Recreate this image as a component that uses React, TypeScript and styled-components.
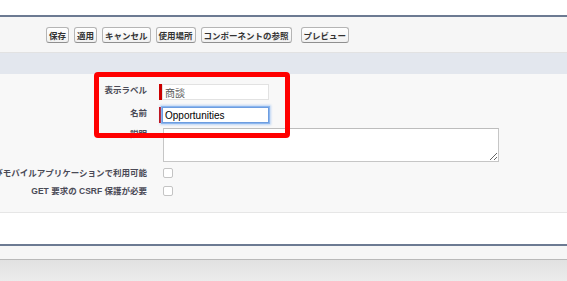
import styled, { createGlobalStyle } from "styled-components";

const GlobalStyle = createGlobalStyle`
  html, body {
    margin: 0;
    padding: 0;
    background: #ffffff;
  }
  body {
    font-family: "Liberation Sans", Arial, "Noto Sans CJK JP", sans-serif;
    color: #333;
  }
`;

type ButtonItem = {
  label: string;
  spaced?: boolean;
};

const buttons: ButtonItem[] = [
  { label: "保存" },
  { label: "適用" },
  { label: "キャンセル" },
  { label: "使用場所" },
  { label: "コンポーネントの参照" },
  { label: "プレビュー", spaced: true },
];

export default function App() {
  return (
    <>
      <GlobalStyle />
      <Page>
        <TopSpace />
        <Toolbar>
          {buttons.map((b) => (
            <Button key={b.label} $spaced={b.spaced}>
              {b.label}
            </Button>
          ))}
        </Toolbar>
        <SectionBand />
        <FormPanel>
          <Row $top={0}>
            <Label>
              <span>表示ラベル</span>
            </Label>
            <Field $required>
              <TextInput defaultValue="商談" $muted />
            </Field>
          </Row>
          <Row $top={7}>
            <Label>
              <span>名前</span>
            </Label>
            <Field $required>
              <TextInput defaultValue="Opportunities" $focused />
            </Field>
          </Row>
          <Row $top={5}>
            <Label>
              <span>説明</span>
            </Label>
            <Field>
              <TextArea />
            </Field>
          </Row>
          <CheckRow $top={5}>
            <Label>
              <span>Lightning Experience、Experience Builder サイト、およびモバイルアプリケーションで利用可能</span>
            </Label>
            <Field>
              <CheckBox type="checkbox" />
            </Field>
          </CheckRow>
          <CheckRow $top={6}>
            <Label>
              <span>GET 要求の CSRF 保護が必要</span>
            </Label>
            <Field>
              <CheckBox type="checkbox" />
            </Field>
          </CheckRow>
        </FormPanel>
        <WhiteGap />
        <FooterBar />
        <BottomShade />
        <Highlight />
      </Page>
    </>
  );
}

const Page = styled.div`
  position: relative;
  width: 567px;
  height: 281px;
  overflow: hidden;
  display: flex;
  flex-direction: column;
`;

const TopSpace = styled.div`
  height: 15px;
  flex: none;
  background: #ffffff;
`;

const Toolbar = styled.div`
  display: flex;
  flex: none;
  align-items: flex-start;
  gap: 5px;
  height: 25px;
  padding: 10px 0 0 46px;
  background: #f6f6f6;
  border-top: 2px solid #6c7a92;
  border-bottom: 1px solid #e2e2e2;
`;

const Button = styled.button<{ $spaced?: boolean }>`
  height: 16px;
  margin: 0 0 0 ${(p) => (p.$spaced ? 4 : 0)}px;
  padding: 0 2px;
  font-family: "Noto Sans CJK JP", sans-serif;
  font-size: 8.5px;
  font-weight: bold;
  line-height: 14px;
  color: #333;
  background: linear-gradient(#ffffff, #f1f1f1);
  border: 1px solid #b5b5b5;
  border-bottom-color: #8f8f8f;
  border-radius: 3px;
  white-space: nowrap;
  cursor: pointer;
`;

const SectionBand = styled.div`
  height: 21px;
  flex: none;
  background: #e3e7ee;
`;

const FormPanel = styled.div`
  display: flex;
  flex: none;
  flex-direction: column;
  height: 128px;
  padding-top: 10px;
  background: #f8f8f8;
  border-bottom: 1px solid #e6e6e6;
`;

const Row = styled.div<{ $top: number }>`
  display: grid;
  grid-template-columns: 147px 1fr;
  column-gap: 12px;
  align-items: start;
  margin-top: ${(p) => p.$top}px;
`;

const CheckRow = styled(Row)`
  align-items: center;
`;

const Label = styled.div`
  display: flex;
  justify-content: flex-end;
  min-width: 0;
  overflow: visible;
  font-family: "Liberation Sans", Arial, "Noto Sans CJK JP", sans-serif;
  font-size: 8.5px;
  font-weight: bold;
  line-height: 12px;
  color: #4a4a56;
  white-space: nowrap;

  span {
    flex: none;
  }
`;

const Field = styled.div<{ $required?: boolean }>`
  display: flex;
  align-items: center;
  padding-left: ${(p) => (p.$required ? 0 : 4)}px;
  border-left: ${(p) => (p.$required ? "3px solid #c00" : "none")};
  justify-self: start;
`;

const TextInput = styled.input<{ $focused?: boolean; $muted?: boolean }>`
  width: 107px;
  height: 16px;
  box-sizing: border-box;
  margin: 0;
  padding: 0 2px;
  font-family: "Liberation Sans", Arial, "Noto Sans CJK JP", sans-serif;
  font-size: 10px;
  color: ${(p) => (p.$muted ? "#5a5a5a" : "#000")};
  background: #ffffff;
  border: 1px solid ${(p) => (p.$focused ? "#6d9de0" : "#e2e2e2")};
  box-shadow: ${(p) =>
    p.$focused ? "0 0 0 1px #8cb6ee, 0 0 2px 2px rgba(120,170,240,0.45)" : "none"};
  outline: none;
`;

const TextArea = styled.textarea`
  width: 336px;
  height: 34px;
  box-sizing: border-box;
  margin: 0;
  padding: 2px;
  background: #ffffff;
  border: 1px solid #c6c6c6;
  border-top-color: #bdbdbd;
  outline: none;
  resize: both;
`;

const CheckBox = styled.input`
  appearance: none;
  width: 10px;
  height: 10px;
  margin: 0;
  background: #ffffff;
  border: 1px solid #c4c4c4;
  border-radius: 2px;
`;

const WhiteGap = styled.div`
  height: 31px;
  flex: none;
  background: #ffffff;
`;

const FooterBar = styled.div`
  height: 13px;
  flex: none;
  background: #f6f6f6;
  border-top: 2px solid #6c7a92;
  border-bottom: 1px solid #b9b9b9;
`;

const BottomShade = styled.div`
  flex: 1;
  background: linear-gradient(#e1e1e1, #ececec);
`;

const Highlight = styled.div`
  position: absolute;
  left: 94px;
  top: 72px;
  width: 196px;
  height: 66px;
  box-sizing: border-box;
  border: 5px solid #ff0000;
  border-radius: 4px;
  pointer-events: none;
`;
